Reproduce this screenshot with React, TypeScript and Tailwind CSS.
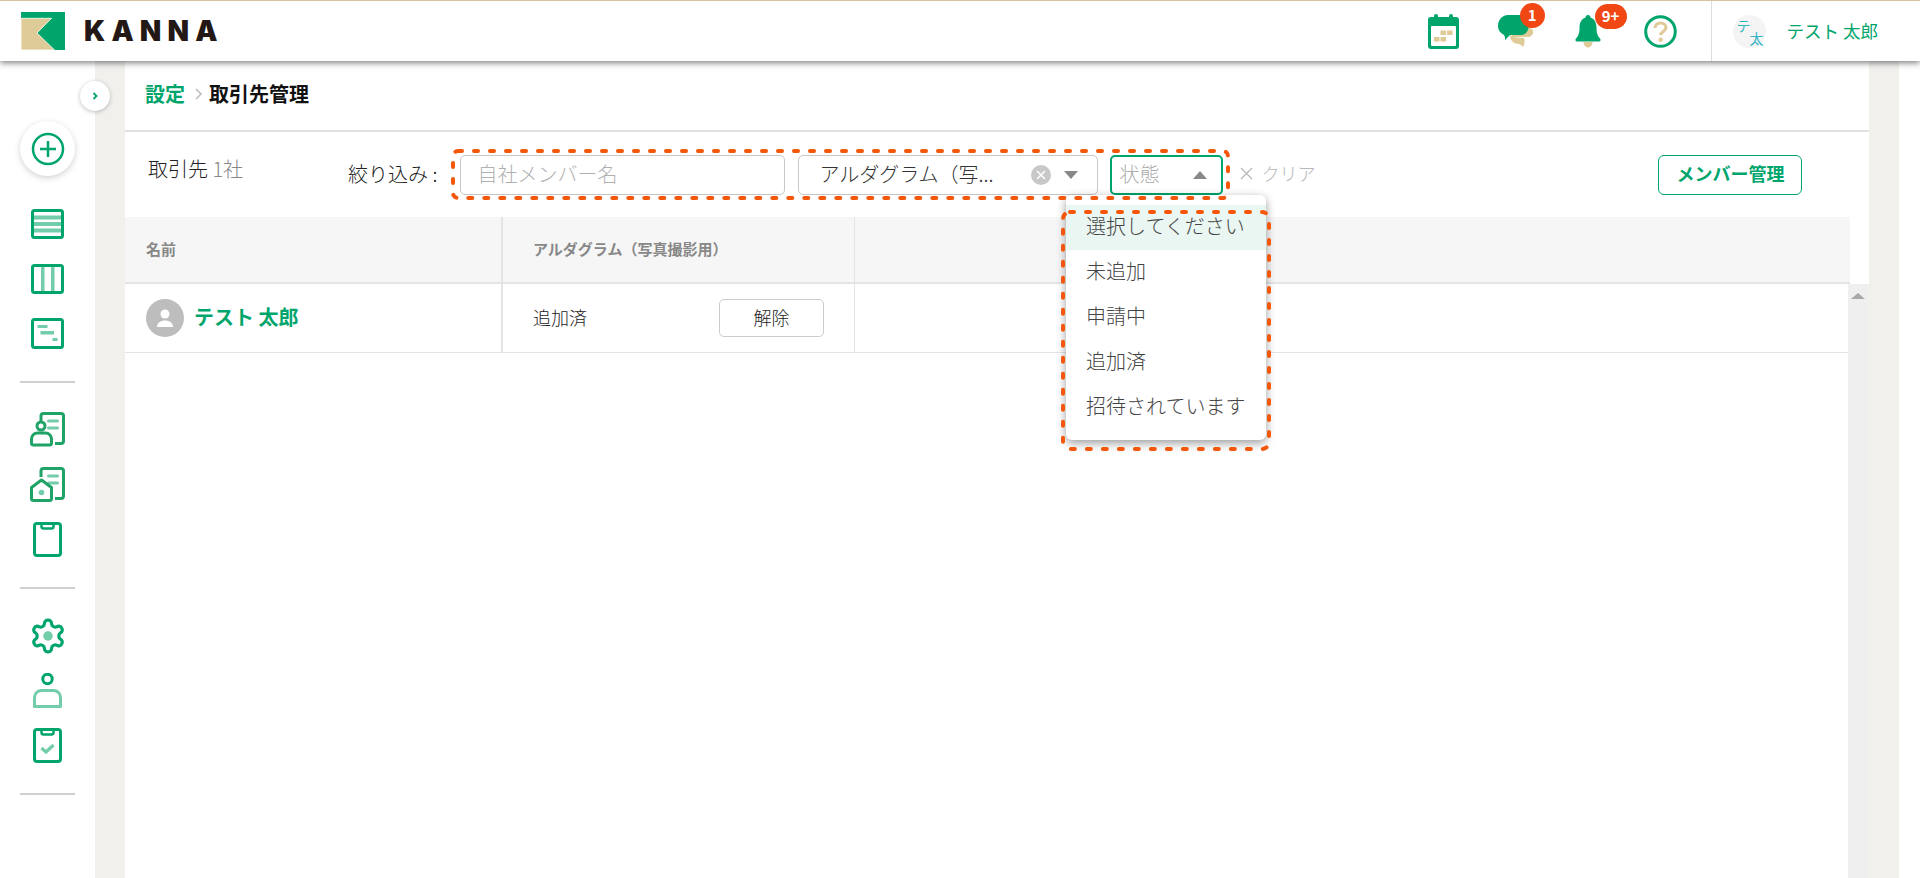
import { ReactNode } from 'react';

const GREEN = '#00a56c';
const LIGHT = '#74cdaa';
const BEIGE = '#dfcb98';
const DOC_GREEN = '#1fa366';

/** Header icons */
const CalendarIcon = () => (
  <svg width="31" height="35" viewBox="0 0 31 35">
    <rect x="0" y="3" width="31" height="32" rx="3" fill={GREEN} />
    <rect x="6" y="0" width="4" height="7" rx="2" fill={GREEN} />
    <rect x="21" y="0" width="4" height="7" rx="2" fill={GREEN} />
    <rect x="3" y="12" width="25" height="20" rx="1" fill="#fff" />
    <rect x="12.5" y="16.5" width="5.5" height="4.5" fill={BEIGE} />
    <rect x="19" y="16.5" width="5.5" height="4.5" fill={BEIGE} />
    <rect x="6" y="23" width="5.5" height="4.5" fill={BEIGE} />
    <rect x="12.5" y="23" width="5.5" height="4.5" fill={BEIGE} />
  </svg>
);

const ChatIcon = () => (
  <svg width="36" height="33" viewBox="0 0 36 33">
    <path d="M14 22h16c3 0 6-3 5-6-.5-2-2-3-4-3l-8-1-9 6z" fill={BEIGE} />
    <path d="M12 20c3 2 8 3 14 3 1 2 1 6-1 9-1-1-2-2-4-3-5 0-9-3-9-9z" fill={BEIGE} />
    <path
      d="M10 0h14c5 0 8 4 7 10-.5 6-3 10-8 10H12l-5 5c0-2 0-4-1-5-4-2-6-5-6-9 0-6 4-11 10-11z"
      fill={GREEN}
    />
  </svg>
);

const BellIcon = () => (
  <svg width="26" height="33" viewBox="0 0 26 33">
    <path d="M8.500 27h9c0 3-2 5.500-4.500 5.500S8.500 30 8.500 27z" fill={BEIGE} />
    <path
      d="M13 0c1.500 0 2.500 1 2.500 2.500C20 4 21.500 8 21.500 13c0 5 1 8 3.500 10.500.8.800.8 2.500-.5 3H1.500c-1.300-.5-1.300-2.200-.5-3C3.500 21 4.500 18 4.500 13c0-5 1.500-9 6-10.500C10.500 1 11.500 0 13 0z"
      fill={GREEN}
    />
  </svg>
);

const HelpIcon = () => (
  <svg width="33" height="33" viewBox="0 0 33 33">
    <circle cx="16.500" cy="16.500" r="14.800" fill="none" stroke={GREEN} strokeWidth="3" />
    <path
      d="M11 13c0-3 2.500-5 5.500-5s5.500 2 5.500 4.800c0 3.700-5.300 3.700-5.300 7.200"
      fill="none"
      stroke={BEIGE}
      strokeWidth="3.200"
    />
    <circle cx="16.700" cy="24.800" r="2.200" fill={BEIGE} />
  </svg>
);

/** Sidebar icons */
const TableIcon = () => (
  <svg width="33" height="30" viewBox="0 0 33 30">
    <rect x="3" y="6.500" width="27" height="4" fill={LIGHT} />
    <rect x="3" y="13" width="27" height="4" fill={LIGHT} />
    <rect x="3" y="19.500" width="27" height="4" fill={LIGHT} />
    <rect x="1.500" y="1.500" width="30" height="27" rx="2" fill="none" stroke={GREEN} strokeWidth="3" />
  </svg>
);

const BoardIcon = () => (
  <svg width="33" height="30" viewBox="0 0 33 30">
    <rect x="10" y="2" width="3.500" height="26" fill={LIGHT} />
    <rect x="20" y="2" width="3.500" height="26" fill={LIGHT} />
    <rect x="1.500" y="1.500" width="30" height="27" rx="2" fill="none" stroke={GREEN} strokeWidth="3" />
  </svg>
);

const GanttIcon = () => (
  <svg width="33" height="31" viewBox="0 0 33 31">
    <rect x="6.500" y="7" width="10" height="3" fill={LIGHT} />
    <rect x="9.500" y="13" width="13.500" height="3.500" fill={LIGHT} />
    <rect x="21.500" y="20" width="5" height="3" fill={LIGHT} />
    <rect x="1.500" y="1.500" width="30" height="28" rx="2" fill="none" stroke={GREEN} strokeWidth="3" />
  </svg>
);

const DocBack = () => (
  <>
    <path
      d="M11 10V4a2.500 2.500 0 0 1 2.500-2.500h18A2.500 2.500 0 0 1 33.500 4v25a2.500 2.500 0 0 1-2.500 2.500H25"
      fill="none"
      stroke={DOC_GREEN}
      strokeWidth="3"
    />
    <rect x="17" y="7.500" width="12" height="3" rx="1.500" fill={LIGHT} />
    <rect x="17" y="14.500" width="12" height="3" rx="1.500" fill={LIGHT} />
  </>
);

const PersonDocIcon = () => (
  <svg width="35" height="35" viewBox="0 0 35 35">
    <DocBack />
    <circle cx="11" cy="14" r="4" fill="#fff" stroke={DOC_GREEN} strokeWidth="3" />
    <path
      d="M1.500 27a6 6 0 0 1 6-6h8a6 6 0 0 1 6 6v4a2 2 0 0 1-2 2h-16a2 2 0 0 1-2-2z"
      fill="#fff"
      stroke={DOC_GREEN}
      strokeWidth="3"
    />
  </svg>
);

const HouseDocIcon = () => (
  <svg width="35" height="35" viewBox="0 0 35 35">
    <DocBack />
    <path
      d="M1.500 20.500 11.500 13l10 7.500v11a2 2 0 0 1-2 2h-16a2 2 0 0 1-2-2z"
      fill="#fff"
      stroke={DOC_GREEN}
      strokeWidth="3"
      strokeLinejoin="round"
    />
    <circle cx="11.500" cy="25.500" r="2.800" fill={LIGHT} />
  </svg>
);

const ClipboardIcon = ({ children }: { children?: ReactNode }) => (
  <svg width="29" height="35" viewBox="0 0 29 35">
    <rect x="1.500" y="1.500" width="26" height="32" rx="2.500" fill="none" stroke={GREEN} strokeWidth="3" />
    <path d="M8.500 2v2.500a2 2 0 0 0 2 2h8a2 2 0 0 0 2-2V2" fill="none" stroke={GREEN} strokeWidth="2.500" />
    {children}
  </svg>
);

const GearIcon = () => (
  <svg width="38" height="38" viewBox="0 0 24 24">
    <path
      d="M12.220 2h-.44a2 2 0 0 0-2 2v.18a2 2 0 0 1-1 1.730l-.43.25a2 2 0 0 1-2 0l-.15-.08a2 2 0 0 0-2.730.73l-.22.38a2 2 0 0 0 .73 2.730l.15.1a2 2 0 0 1 1 1.720v.51a2 2 0 0 1-1 1.740l-.15.09a2 2 0 0 0-.73 2.730l.22.38a2 2 0 0 0 2.730.73l.15-.08a2 2 0 0 1 2 0l.43.25a2 2 0 0 1 1 1.730V20a2 2 0 0 0 2 2h.44a2 2 0 0 0 2-2v-.18a2 2 0 0 1 1-1.730l.43-.25a2 2 0 0 1 2 0l.15.08a2 2 0 0 0 2.730-.73l.22-.39a2 2 0 0 0-.73-2.730l-.15-.08a2 2 0 0 1-1-1.740v-.5a2 2 0 0 1 1-1.740l.15-.09a2 2 0 0 0 .73-2.730l-.22-.38a2 2 0 0 0-2.730-.73l-.15.08a2 2 0 0 1-2 0l-.43-.25a2 2 0 0 1-1-1.730V4a2 2 0 0 0-2-2z"
      fill="none"
      stroke={GREEN}
      strokeWidth="2"
    />
    <circle cx="12" cy="12" r="3" fill={LIGHT} />
  </svg>
);

const PersonIcon = () => (
  <svg width="29" height="35" viewBox="0 0 29 35">
    <circle cx="14.500" cy="6" r="4.700" fill="none" stroke={GREEN} strokeWidth="3" />
    <path
      d="M1.500 33.500h26v-9a7 7 0 0 0-7-7H8.500a7 7 0 0 0-7 7z"
      fill="none"
      stroke={LIGHT}
      strokeWidth="3"
      strokeLinejoin="round"
    />
  </svg>
);

const Logo = () => (
  <svg width="44" height="38" viewBox="0 0 44 38">
    <rect width="44" height="38" fill={GREEN} />
    <path d="M0 6.300h30.500L16 21l17.500 17H0z" fill={BEIGE} stroke="#fff" strokeWidth="0.800" />
  </svg>
);

const Divider = () => <div className="mt-5 mb-[19px] h-[2px] w-[55px] bg-[#d0d0d0]" />;

const NavItem = ({ children }: { children: ReactNode }) => (
  <div className="flex h-[55px] items-center justify-center">{children}</div>
);

const Sidebar = () => (
  <aside className="flex w-[95px] shrink-0 flex-col items-center bg-white pt-[60px]">
    <div className="mb-5 flex h-[55px] w-[55px] items-center justify-center rounded-full bg-white shadow-[0_2px_6px_rgba(0,0,0,0.18)]">
      <svg width="34" height="34" viewBox="0 0 34 34">
        <circle cx="17" cy="17" r="15" fill="none" stroke={GREEN} strokeWidth="2.500" />
        <path d="M17 9v16M9 17h16" fill="none" stroke={GREEN} strokeWidth="2.500" />
      </svg>
    </div>
    <NavItem><TableIcon /></NavItem>
    <NavItem><BoardIcon /></NavItem>
    <NavItem><GanttIcon /></NavItem>
    <Divider />
    <NavItem><PersonDocIcon /></NavItem>
    <NavItem><HouseDocIcon /></NavItem>
    <NavItem><ClipboardIcon /></NavItem>
    <Divider />
    <NavItem><GearIcon /></NavItem>
    <NavItem><PersonIcon /></NavItem>
    <NavItem>
      <ClipboardIcon>
        <path d="M8.500 20l4.500 4 7.500-7" fill="none" stroke={LIGHT} strokeWidth="3.200" />
      </ClipboardIcon>
    </NavItem>
    <Divider />
  </aside>
);

const Header = () => (
  <header className="relative z-20 flex h-[61px] shrink-0 items-center border-t border-[#d8c3a0] bg-white shadow-[0_2px_6px_rgba(0,0,0,0.5)]">
    <div className="ml-[21px] flex items-center">
      <Logo />
      <span className="ml-[19px] font-['Inter',sans-serif] text-[28px] leading-none font-black tracking-[0.22em] text-[#231815]">
        KANNA
      </span>
    </div>
    <div className="ml-auto flex h-full items-center">
      <CalendarIcon />
      <div className="relative ml-[39px] flex">
        <ChatIcon />
        <span className="absolute top-[-12px] left-[22px] flex h-[25px] w-[25px] items-center justify-center rounded-full bg-[#f04714] text-[15px] font-bold text-white">
          1
        </span>
      </div>
      <div className="relative ml-[41px] flex">
        <BellIcon />
        <span className="absolute top-[-11px] left-[20px] flex h-[25px] w-[32px] items-center justify-center rounded-full bg-[#f04714] text-[15px] font-bold text-white">
          9+
        </span>
      </div>
      <div className="ml-[43px] flex"><HelpIcon /></div>
      <div className="ml-[34px] h-full w-px bg-[#dddddd]" />
      <div className="relative ml-[21px] h-[33px] w-[33px] rounded-full bg-[#f4f4f4] text-[14px] leading-none text-[#35b4c4]">
        <span className="absolute top-[3px] left-[4px]">テ</span>
        <span className="absolute top-[16px] left-[17px]">太</span>
      </div>
      <span className="mr-[42px] ml-[21px] text-[17.5px] text-[#00a56c]">テスト 太郎</span>
    </div>
  </header>
);

const Caret = ({ up }: { up?: boolean }) => (
  <svg width="14" height="8" viewBox="0 0 14 8" className={up ? 'rotate-180' : ''}>
    <path d="M0 0h14L7 8z" fill="#888888" />
  </svg>
);

const FilterBar = () => (
  <div className="flex h-[85px] w-full shrink-0 items-center pl-[23px]">
    <span className="mb-[11px] w-[200px] text-[20px] font-light text-[#222222]">
      取引先 <span className="text-[#888888]">1社</span>
    </span>
    <span className="pb-[2px] text-[20px] font-light text-[#222222]">絞り込み :</span>
    <div className="ml-[23px] flex h-[40px] w-[325px] items-center rounded-[5px] border border-[#c8c8c8] pb-[2px] pl-[16px] text-[20px] font-light text-[#b0b0b0]">
      自社メンバー名
    </div>
    <div className="ml-[13px] flex h-[40px] w-[300px] items-center rounded-[5px] border border-[#c8c8c8] pr-[19px] pl-[20px]">
      <span className="pb-[2px] text-[20px] font-light text-[#333333]">アルダグラム（写...</span>
      <span className="ml-auto flex h-[20px] w-[20px] items-center justify-center rounded-full bg-[#c8c8c8]">
        <svg width="10" height="10" viewBox="0 0 10 10">
          <path d="M1 1l8 8M9 1l-8 8" stroke="#fff" strokeWidth="1.500" />
        </svg>
      </span>
      <span className="ml-[13px] flex"><Caret /></span>
    </div>
    <div className="ml-[12px] flex h-[40px] w-[113px] items-center rounded-[5px] border-2 border-[#00a56c] pr-[14px] pb-[2px] pl-[7px] text-[20px] font-light text-[#aaaaaa]">
      状態
      <span className="ml-auto flex pt-[2px]"><Caret up /></span>
    </div>
    <span className="ml-[17px] flex items-center pb-[2px] text-[18px] font-light text-[#b8b8b8]">
      <svg width="13" height="13" viewBox="0 0 13 13" className="mr-[8px]">
        <path d="M1 1l11 11M12 1L1 12" stroke="#b8b8b8" strokeWidth="1.300" />
      </svg>
      クリア
    </span>
    <button
      type="button"
      className="ml-[343px] flex h-[40px] w-[144px] items-center justify-center rounded-[6px] border border-[#00a56c] pb-[2px] text-[18px] font-bold text-[#00a56c]"
    >
      メンバー管理
    </button>
  </div>
);

const MemberTable = () => (
  <div className="flex min-h-0 flex-1 flex-col">
    <div className="flex h-[67px] w-[1725px] shrink-0 border-b-2 border-[#e4e4e4] bg-[#f6f6f6] text-[15px] font-bold text-[#888888]">
      <div className="flex w-[378px] items-center border-r-2 border-[#e4e4e4] pl-[21px]">名前</div>
      <div className="flex w-[352px] items-center border-r border-[#e4e4e4] pl-[30px]">
        アルダグラム（写真撮影用）
      </div>
    </div>
    <div className="flex min-h-0 flex-1">
      <div className="flex-1">
        <div className="flex h-[69px] border-b border-[#e4e4e4]">
          <div className="flex w-[378px] items-center gap-[10px] border-r-2 border-[#e4e4e4] pl-[21px]">
            <span className="flex h-[38px] w-[38px] items-center justify-center rounded-full bg-[#bdbdbd]">
              <svg width="22" height="22" viewBox="0 0 22 22">
                <circle cx="11" cy="7" r="4.500" fill="#fff" />
                <path d="M3 20c0-4 3.500-6.500 8-6.500s8 2.500 8 6.500z" fill="#fff" />
              </svg>
            </span>
            <span className="pb-[2px] text-[20px] font-bold text-[#00a56c]">テスト 太郎</span>
          </div>
          <div className="flex w-[352px] items-center justify-between border-r border-[#e4e4e4] pr-[30px] pl-[30px] text-[18px] font-light text-[#222222]">
            <span className="pb-[2px]">追加済</span>
            <button
              type="button"
              className="h-[38px] w-[105px] rounded-[5px] border border-[#cccccc] pb-[2px] text-[18px] font-light"
            >
              解除
            </button>
          </div>
        </div>
      </div>
      <div className="flex w-[21px] shrink-0 justify-center bg-[#efeff0] pt-[9px]">
        <svg width="14" height="6" viewBox="0 0 14 6" className="ml-[-1px]">
          <path d="M7 0l7 6H0z" fill="#a8a8a8" />
        </svg>
      </div>
    </div>
  </div>
);

const StatusDropdown = () => (
  <div className="absolute top-[134px] left-[1066px] z-10 h-[245px] w-[200px] rounded-[6px] bg-white py-[10px] text-[20px] font-light text-[#444444] shadow-[0_3px_10px_rgba(0,0,0,0.4)]">
    <div className="flex h-[45px] items-center bg-[#eaf6f2] pb-[3px] pl-[20px]">選択してください</div>
    <div className="flex h-[45px] items-center pb-[3px] pl-[20px]">未追加</div>
    <div className="flex h-[45px] items-center pb-[3px] pl-[20px]">申請中</div>
    <div className="flex h-[45px] items-center pb-[3px] pl-[20px]">追加済</div>
    <div className="flex h-[45px] items-center pb-[3px] pl-[20px]">招待されています</div>
  </div>
);

/** Orange dashed annotations drawn over the screenshot */
const Annotations = () => (
  <svg className="absolute top-0 left-0 z-30" width="1920" height="878" fill="none">
    <rect
      x="453"
      y="151"
      width="775"
      height="47"
      rx="5"
      stroke="#f4570a"
      strokeWidth="4"
      strokeLinecap="round"
      strokeDasharray="4 12"
    />
    <rect
      x="1063"
      y="212"
      width="206"
      height="237"
      rx="7"
      stroke="#f4570a"
      strokeWidth="4"
      strokeLinecap="round"
      strokeDasharray="4 12"
    />
  </svg>
);

const App = () => (
  <div className="relative flex h-[878px] w-[1920px] flex-col overflow-hidden bg-white font-['Noto_Sans_CJK_JP','Noto_Sans',sans-serif]">
    <Header />
    <div className="relative flex min-h-0 flex-1">
      <Sidebar />
      <div className="relative flex w-[30px] shrink-0 justify-center bg-[#f1f0ed]" />
      <main className="flex w-[1744px] shrink-0 flex-col bg-white">
        <div className="flex h-[71px] shrink-0 items-center border-b-2 border-[#e0e0e0] pb-[3px] pl-[20px] text-[20px] font-bold">
          <span className="text-[#00a56c]">設定</span>
          <svg width="8" height="12" viewBox="0 0 8 12" className="mr-[6px] ml-[10px]">
            <path d="M1 1l5 5-5 5" fill="none" stroke="#bbbbbb" strokeWidth="1.500" />
          </svg>
          <span className="text-[#111111]">取引先管理</span>
        </div>
        <FilterBar />
        <MemberTable />
      </main>
      <div className="w-[30px] shrink-0 bg-[#f1f0ed]" />
      <div className="absolute top-[20px] left-[80px] flex h-[30px] w-[30px] items-center justify-center rounded-full bg-white shadow-[0_1px_4px_rgba(0,0,0,0.25)]">
        <svg width="8" height="10" viewBox="0 0 8 10">
          <path d="M2.500 2l3 3-3 3" fill="none" stroke={GREEN} strokeWidth="1.800" />
        </svg>
      </div>
      <StatusDropdown />
    </div>
    <Annotations />
  </div>
);

export default App;
